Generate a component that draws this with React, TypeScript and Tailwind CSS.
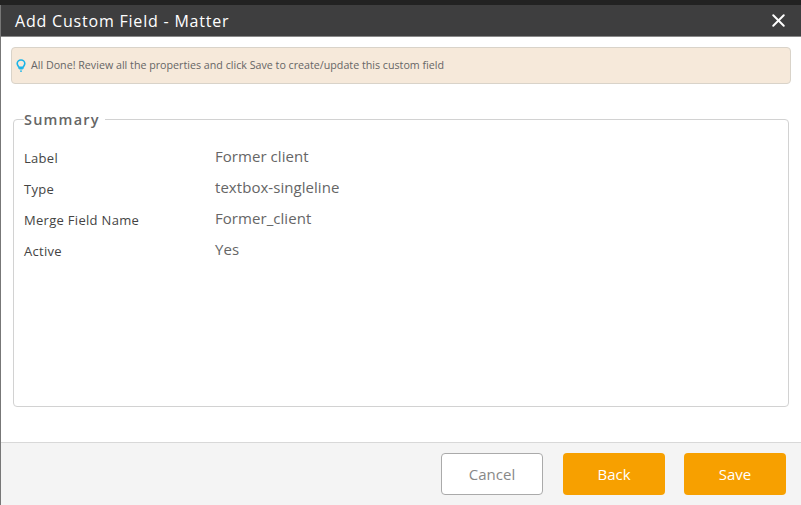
import { X } from "lucide-react";

const rows = [
  { label: "Label", value: "Former client" },
  { label: "Type", value: "textbox-singleline" },
  { label: "Merge Field Name", value: "Former_client" },
  { label: "Active", value: "Yes" },
];

function BulbIcon() {
  return (
    <svg width="10" height="13" viewBox="0 0 10 13" fill="none">
      <path
        d="M5 1C2.800 1 1.200 2.600 1.200 4.500c0 1.500 1 2.400 1.600 3.400.2.400.3.800.3 1.100h3.800c0-.3.100-.7.300-1.100.6-1 1.600-1.900 1.600-3.400C8.800 2.600 7.200 1 5 1Z"
        stroke="#1ab4e8"
        strokeWidth="1.600"
      />
      <path d="M3.300 7.500h3.400v3H3.300z" fill="#1ab4e8" />
      <path d="M4 12.200h2" stroke="#1ab4e8" strokeWidth="1.300" />
    </svg>
  );
}

export default function App() {
  return (
    <div className="h-[505px] w-[801px] overflow-hidden bg-[#222222] pt-[5px] font-['Open_Sans',sans-serif]">
      <div className="flex h-[500px] flex-col border-l border-[#777777] bg-white">
        <div className="flex h-[32px] shrink-0 items-center justify-between border-b border-[#888888] bg-[#3e3e3f] pl-[14px] pr-[12px]">
          <h1 className="text-[16px] font-medium tracking-[0.8px] text-white">Add Custom Field - Matter</h1>
          <X size={21} strokeWidth={2.300} color="#ffffff" />
        </div>

        <div className="flex-1 px-[10px] pt-[10px]">
          <div className="flex h-[37px] items-center gap-[5px] rounded-[4px] border border-[#d9d3c9] bg-[#f6e9da] pl-[4px]">
            <BulbIcon />
            <span className="text-[10.7px] text-[#666666]">
              All Done! Review all the properties and click Save to create/update this custom field
            </span>
          </div>

          <fieldset className="mx-[2px] mt-[26px] h-[297px] rounded-[4px] border border-[#d2d2d2] px-[10px]">
            <legend className="pr-[5px] text-[14.5px] font-semibold leading-[19px] tracking-[1.2px] text-[#666666]">
              Summary
            </legend>
            <div className="mt-[12px] flex flex-col">
              {rows.map((row) => (
                <div key={row.label} className="flex h-[31px] items-center">
                  <span className="mt-[5px] w-[191px] text-[13px] tracking-[0.3px] text-[#444444]">{row.label}</span>
                  <span className="text-[15px] tracking-[0.05px] text-[#666666]">{row.value}</span>
                </div>
              ))}
            </div>
          </fieldset>
        </div>

        <div className="flex h-[63px] shrink-0 items-start justify-end border-t border-[#d8d8d8] bg-[#f4f4f4] pr-[15px] pt-[10px]">
          <button className="h-[42px] w-[102px] rounded-[4px] border border-[#aaaaaa] bg-white text-[15px] text-[#888888]">
            Cancel
          </button>
          <button className="ml-[20px] h-[42px] w-[102px] rounded-[4px] bg-[#f7a000] text-[15px] text-white">
            Back
          </button>
          <button className="ml-[19px] h-[42px] w-[102px] rounded-[4px] bg-[#f7a000] text-[15px] text-white">
            Save
          </button>
        </div>
      </div>
    </div>
  );
}
